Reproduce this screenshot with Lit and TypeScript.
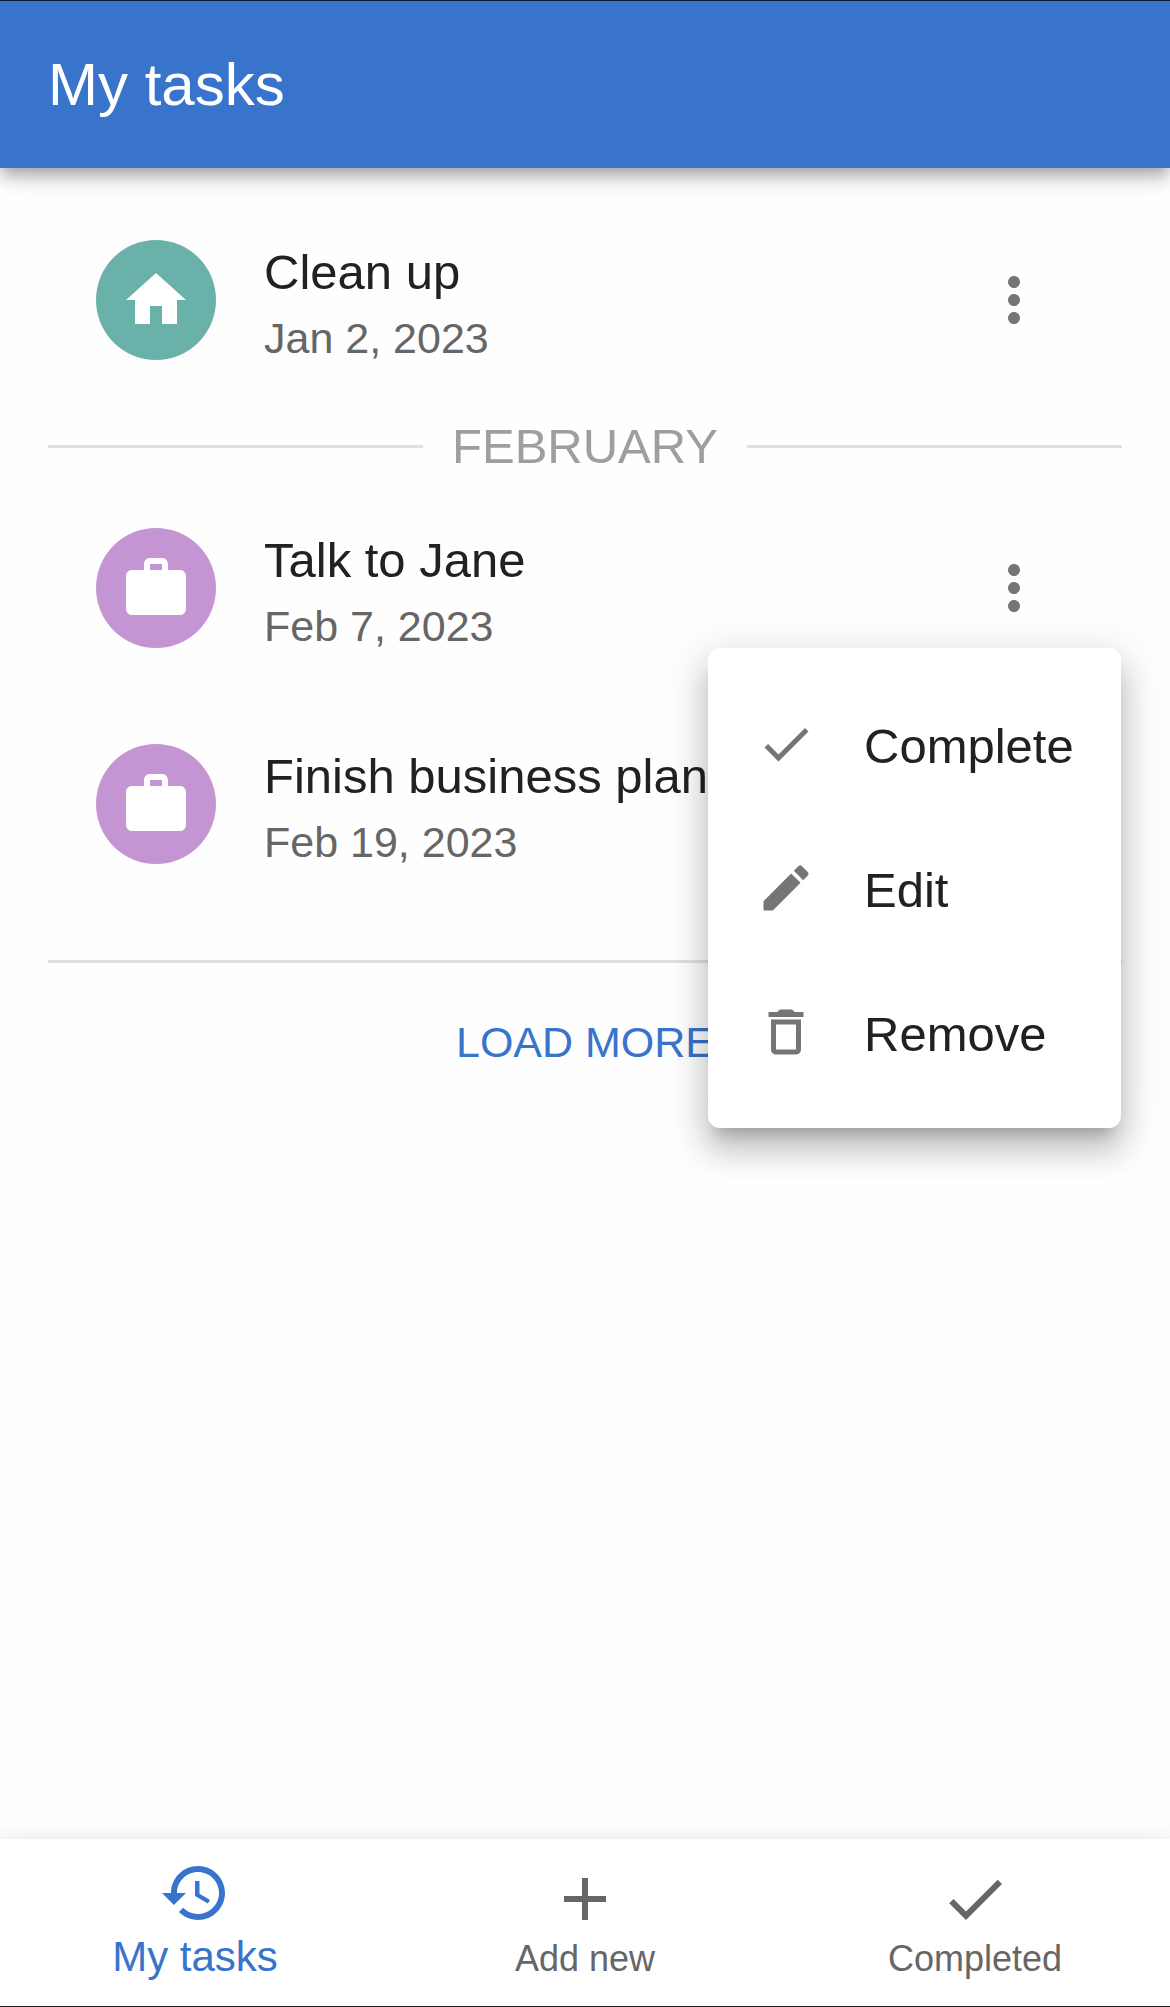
import { LitElement, html, css, svg, nothing } from "lit";
import { customElement, property, state } from "lit/decorators.js";
import { classMap } from "lit/directives/class-map.js";

type IconName = "home" | "work" | "more" | "check" | "edit" | "remove" | "history" | "add";

const ICONS: Record<IconName, unknown> = {
  home: svg`<path d="M10 20v-6h4v6h5v-8h3L12 3 2 12h3v8z" />`,
  work: svg`<path d="M20 6h-4V4c0-1.11-.89-2-2-2h-4c-1.11 0-2 .89-2 2v2H4c-1.11 0-2 .89-2 2v11c0 1.11.89 2 2 2h16c1.11 0 2-.89 2-2V8c0-1.11-.89-2-2-2zm-6 0h-4V4h4v2z" />`,
  more: svg`<path d="M12 8c1.1 0 2-.9 2-2s-.9-2-2-2-2 .9-2 2 .9 2 2 2zm0 2c-1.1 0-2 .9-2 2s.9 2 2 2 2-.9 2-2-.9-2-2-2zm0 6c-1.1 0-2 .9-2 2s.9 2 2 2 2-.9 2-2-.9-2-2-2z" />`,
  check: svg`<path d="M9 16.17 4.83 12l-1.42 1.41L9 19 21 7l-1.41-1.41z" />`,
  edit: svg`<path d="M3 17.25V21h3.75L17.81 9.94l-3.75-3.75L3 17.25zM20.71 7.04c.39-.39.39-1.02 0-1.41l-2.34-2.34a.9959.9959 0 0 0-1.41 0l-1.83 1.83 3.75 3.75 1.83-1.83z" />`,
  remove: svg`<path d="M6 19c0 1.1.9 2 2 2h8c1.1 0 2-.9 2-2V7H6v12zM8 9h8v10H8V9zm7.5-5-1-1h-5l-1 1H5v2h14V4z" />`,
  history: svg`<path d="M13 3c-4.97 0-9 4.03-9 9H1l3.89 3.89.07.14L9 12H6c0-3.87 3.13-7 7-7s7 3.13 7 7-3.13 7-7 7c-1.93 0-3.68-.79-4.94-2.06l-1.42 1.42C8.27 19.99 10.51 21 13 21c4.97 0 9-4.03 9-9s-4.03-9-9-9zm-1 5v5l4.28 2.54.72-1.21-3.5-2.08V8H12z" />`,
  add: svg`<path d="M19 13h-6v6h-2v-6H5v-2h6V5h2v6h6v2z" />`,
};

interface Task {
  id: number;
  title: string;
  date: string;
  kind: "home" | "work";
}

interface Section {
  heading?: string;
  tasks: Task[];
}

const SECTIONS: Section[] = [
  { tasks: [{ id: 1, title: "Clean up", date: "Jan 2, 2023", kind: "home" }] },
  {
    heading: "FEBRUARY",
    tasks: [
      { id: 2, title: "Talk to Jane", date: "Feb 7, 2023", kind: "work" },
      { id: 3, title: "Finish business plan", date: "Feb 19, 2023", kind: "work" },
    ],
  },
];

const ACTIONS: { icon: IconName; label: string }[] = [
  { icon: "check", label: "Complete" },
  { icon: "edit", label: "Edit" },
  { icon: "remove", label: "Remove" },
];

const TABS: { icon: IconName; label: string }[] = [
  { icon: "history", label: "My tasks" },
  { icon: "add", label: "Add new" },
  { icon: "check", label: "Completed" },
];

@customElement("app-icon")
class AppIcon extends LitElement {
  static styles = css`
    :host {
      display: block;
      flex: none;
      width: 72px;
      height: 72px;
    }
    .glyph {
      display: block;
      width: 100%;
      height: 100%;
      fill: currentColor;
    }
  `;

  @property() name: IconName = "home";

  render() {
    return html`<svg class="glyph" viewBox="0 0 24 24" aria-hidden="true">${ICONS[this.name]}</svg>`;
  }
}

@customElement("task-menu")
class TaskMenu extends LitElement {
  static styles = css`
    .menu {
      box-sizing: border-box;
      min-width: 413px;
      margin: 0;
      padding: 24px 0;
      list-style: none;
      background: #fff;
      border-radius: 12px;
      box-shadow:
        0 15px 15px -9px rgba(0, 0, 0, 0.2),
        0 24px 30px 3px rgba(0, 0, 0, 0.14),
        0 9px 42px 6px rgba(0, 0, 0, 0.12);
    }
    .item {
      display: flex;
      align-items: center;
      gap: 48px;
      width: 100%;
      height: 144px;
      padding: 0 0 0 48px;
      border: 0;
      background: none;
      color: #212121;
      font: inherit;
      font-size: 49px;
      line-height: 72px;
      text-align: left;
      cursor: pointer;
    }
    .icon {
      width: 60px;
      height: 60px;
      color: #757575;
    }
    .label {
      padding-top: 4px;
    }
  `;

  render() {
    return html`
      <ul class="menu" role="menu">
        ${ACTIONS.map(
          (a) => html`
            <li role="none">
              <button class="item" role="menuitem" type="button">
                <app-icon class="icon" name=${a.icon}></app-icon>
                <span class="label">${a.label}</span>
              </button>
            </li>
          `,
        )}
      </ul>
    `;
  }
}

@customElement("task-row")
class TaskRow extends LitElement {
  static styles = css`
    :host {
      display: block;
    }
    .row {
      display: flex;
      align-items: center;
      padding: 24px 48px;
    }
    .avatar {
      display: flex;
      align-items: center;
      justify-content: center;
      flex: none;
      width: 120px;
      height: 120px;
      margin-right: 48px;
      border-radius: 50%;
      color: #fff;
    }
    .home {
      background: #6ab1a9;
    }
    .work {
      background: #c494d3;
    }
    .text {
      flex: 1;
      min-width: 0;
      padding: 20px 0 16px;
    }
    .title {
      color: #212121;
      font-size: 49px;
      line-height: 72px;
      white-space: nowrap;
    }
    .date {
      color: #666;
      font-size: 43px;
      line-height: 60px;
    }
    .action {
      position: relative;
    }
    .more {
      display: block;
      padding: 24px;
      border: 0;
      border-radius: 50%;
      background: none;
      color: #757575;
      cursor: pointer;
    }
    .popup {
      position: absolute;
      z-index: 3;
      top: 100%;
      right: -47px;
    }
  `;

  @property({ attribute: false }) task!: Task;
  @property({ type: Boolean }) open = false;

  private toggle() {
    this.dispatchEvent(new CustomEvent("menu-toggle", { detail: this.task.id }));
  }

  render() {
    const { title, date, kind } = this.task;
    return html`
      <div class="row">
        <div class=${classMap({ avatar: true, [kind]: true })}>
          <app-icon name=${kind}></app-icon>
        </div>
        <div class="text">
          <div class="title">${title}</div>
          <div class="date">${date}</div>
        </div>
        <div class="action">
          <button
            class="more"
            type="button"
            aria-label="Task actions"
            aria-haspopup="menu"
            aria-expanded=${this.open ? "true" : "false"}
            @click=${this.toggle}
          >
            <app-icon name="more"></app-icon>
          </button>
          ${this.open ? html`<task-menu class="popup"></task-menu>` : nothing}
        </div>
      </div>
    `;
  }
}

@customElement("app-root")
class AppRoot extends LitElement {
  static styles = css`
    :host {
      display: flex;
      flex-direction: column;
      min-height: 100vh;
      background: #fefefe;
      font-family: "Liberation Sans", Arial, Helvetica, sans-serif;
    }
    .bar {
      position: relative;
      z-index: 1;
      box-sizing: border-box;
      display: flex;
      align-items: center;
      min-height: 168px;
      padding: 0 48px;
      border-top: 1px solid #0d1b30;
      background: #3874cb;
      color: #fff;
      box-shadow:
        0 6px 12px -3px rgba(0, 0, 0, 0.2),
        0 12px 15px 0 rgba(0, 0, 0, 0.14),
        0 3px 30px 0 rgba(0, 0, 0, 0.12);
    }
    .heading {
      margin: 0;
      font-size: 60px;
      font-weight: 400;
      line-height: 96px;
    }
    .content {
      flex: 1;
      padding: 24px 48px;
    }
    .divider {
      display: flex;
      align-items: center;
      gap: 29px;
      margin: 0;
      padding-top: 4px;
      color: #9e9e9e;
      font-size: 49px;
      font-weight: 400;
      line-height: 68px;
    }
    .divider::before,
    .divider::after {
      content: "";
      flex: 1;
      border-top: 3px solid #e0e0e0;
    }
    .rule {
      margin: 48px 0 24px;
      border: 0;
      border-top: 3px solid #e0e0e0;
    }
    .load {
      display: block;
      margin: 0 auto;
      padding: 18px 24px;
      border: 0;
      background: none;
      color: #3874cb;
      font: inherit;
      font-size: 43px;
      line-height: 74px;
      cursor: pointer;
    }
    .nav {
      position: sticky;
      bottom: 0;
      z-index: 2;
      box-sizing: border-box;
      display: flex;
      min-height: 168px;
      background: #fff;
      box-shadow:
        0 9px 9px -6px rgba(0, 0, 0, 0.2),
        0 9px 12px 0 rgba(0, 0, 0, 0.14),
        0 3px 24px 0 rgba(0, 0, 0, 0.12);
    }
    .nav::after {
      content: "";
      position: absolute;
      inset: auto 0 0;
      border-bottom: 1px solid #1b1b1b;
    }
    .tab {
      flex: 1;
      display: flex;
      flex-direction: column;
      align-items: center;
      justify-content: center;
      padding: 0 36px;
      border: 0;
      background: none;
      color: #666;
      font: inherit;
      font-size: 36px;
      line-height: 48px;
      cursor: pointer;
    }
    .tab.active {
      padding-bottom: 4px;
      color: #3874cb;
      font-size: 42px;
      line-height: 56px;
    }
  `;

  @state() private openId: number | null = 2;
  @state() private tab = "My tasks";

  private toggleMenu(e: CustomEvent<number>) {
    this.openId = this.openId === e.detail ? null : e.detail;
  }

  render() {
    return html`
      <header class="bar"><h1 class="heading">My tasks</h1></header>
      <main class="content">
        ${SECTIONS.map(
          (s) => html`
            ${s.heading ? html`<h2 class="divider">${s.heading}</h2>` : nothing}
            ${s.tasks.map(
              (t) => html`
                <task-row
                  .task=${t}
                  ?open=${this.openId === t.id}
                  @menu-toggle=${this.toggleMenu}
                ></task-row>
              `,
            )}
          `,
        )}
        <hr class="rule" />
        <button class="load" type="button">LOAD MORE</button>
      </main>
      <nav class="nav">
        ${TABS.map(
          (t) => html`
            <button
              class=${classMap({ tab: true, active: this.tab === t.label })}
              type="button"
              aria-current=${this.tab === t.label ? "page" : "false"}
              @click=${() => (this.tab = t.label)}
            >
              <app-icon name=${t.icon}></app-icon>
              <span>${t.label}</span>
            </button>
          `,
        )}
      </nav>
    `;
  }
}
